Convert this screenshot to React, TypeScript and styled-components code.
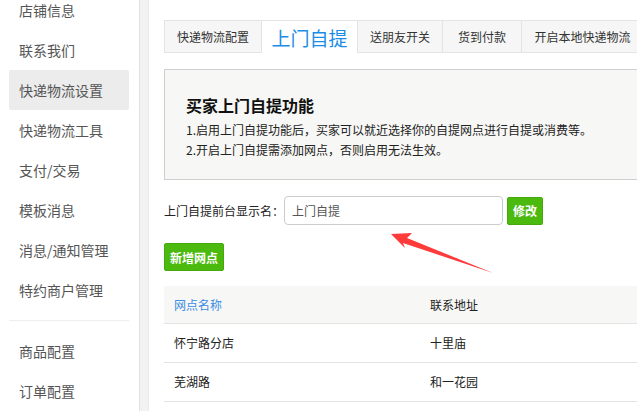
import React from "react";
import styled, { createGlobalStyle } from "styled-components";

const Global = createGlobalStyle`
  html, body { margin: 0; padding: 0; background: #fff; }
  body {
    font-family: "Noto Sans CJK SC", "Noto Sans", "Liberation Sans", sans-serif;
    color: #333;
    overflow: hidden;
  }
  * { box-sizing: border-box; }
`;

const Page = styled.div`
  position: relative;
  display: flex;
  width: 637px;
  height: 411px;
  overflow: hidden;
`;

const Sidebar = styled.nav`
  width: 139px;
  flex: none;
  padding: 0 10px 0 9px;
  margin-top: -10px;
  display: flex;
  flex-direction: column;
`;

const MenuItem = styled.div<{ $active?: boolean }>`
  height: 40px;
  line-height: 40px;
  padding-left: 10px;
  font-size: 14px;
  color: #555;
  border-radius: 2px;
  background: ${(p) => (p.$active ? "#ececec" : "transparent")};
  white-space: nowrap;
`;

const MenuDivider = styled.div`
  height: 1px;
  background: #eeeeee;
  margin: 10px 0;
`;

const Gutter = styled.div`
  width: 10px;
  flex: none;
  background: #f2f2f2;
  border-left: 1px solid #e2e2e2;
  border-right: 1px solid #eaeaea;
`;

const Main = styled.main`
  flex: 1;
  padding: 20px 0 0 15px;
  overflow: hidden;
`;

const Content = styled.div`
  width: 560px;
`;

const Tabs = styled.div`
  display: flex;
  height: 33px;
`;

const Tab = styled.div<{ $active?: boolean; $w: number }>`
  flex: none;
  width: ${(p) => p.$w}px;
  height: 33px;
  display: flex;
  align-items: center;
  justify-content: center;
  white-space: nowrap;
  border-top: 1px solid #e4e4e4;
  border-right: 1px solid #e4e4e4;
  border-bottom: ${(p) => (p.$active ? "none" : "1px solid #e4e4e4")};
  background: ${(p) => (p.$active ? "#fff" : "#f6f6f6")};
  color: ${(p) => (p.$active ? "#1b8de6" : "#333")};
  font-size: ${(p) => (p.$active ? "19px" : "12px")};
  &:first-child { border-left: 1px solid #e4e4e4; }
`;

const InfoBox = styled.section`
  margin-top: 16px;
  border: 1px solid #cfcfcf;
  background: #f7f7f5;
  padding: 23px 20px 19px 21px;
`;

const InfoTitle = styled.h3`
  margin: 0 0 3px;
  font-size: 16px;
  line-height: 24px;
  font-weight: 700;
  color: #111;
`;

const InfoLine = styled.p`
  margin: 0;
  font-size: 12px;
  line-height: 20px;
  color: #222;
  white-space: nowrap;
`;

const FormRow = styled.div`
  margin-top: 16px;
  display: flex;
  align-items: center;
  height: 29px;
`;

const Label = styled.label`
  font-size: 12px;
  color: #222;
  width: 120px;
  white-space: nowrap;
`;

const TextInput = styled.input`
  width: 219px;
  height: 29px;
  border: 1px solid #cccccc;
  border-radius: 4px;
  padding: 0 7px;
  font-family: inherit;
  font-size: 12px;
  color: #555;
  outline: none;
  background: #fff;
`;

const GreenButton = styled.button<{ $ml?: number }>`
  height: 28px;
  margin-left: ${(p) => p.$ml ?? 0}px;
  padding: 0 5px;
  border: 1px solid #45a90d;
  border-radius: 2px;
  background: #4cb90f;
  color: #fff;
  font-family: inherit;
  font-size: 12px;
  font-weight: 700;
  cursor: pointer;
`;

const ActionRow = styled.div`
  margin-top: 18px;
  display: flex;
`;

const Table = styled.div`
  margin-top: 15px;
  display: grid;
  grid-template-columns: 256px 1fr;
`;

const HeadCell = styled.div<{ $blue?: boolean }>`
  height: 38px;
  line-height: 37px;
  padding-left: 10px;
  background: #f7f7f5;
  border-bottom: 1px solid #e3e3e3;
  font-size: 12px;
  color: ${(p) => (p.$blue ? "#3b8ee3" : "#222")};
`;

const Cell = styled.div`
  height: 39px;
  line-height: 38px;
  padding-left: 10px;
  border-bottom: 1px solid #e3e3e3;
  font-size: 12px;
  color: #222;
`;

const Overlay = styled.svg`
  position: absolute;
  left: 0;
  top: 0;
  pointer-events: none;
`;

const menu = [
  "店铺信息",
  "联系我们",
  "快递物流设置",
  "快递物流工具",
  "支付/交易",
  "模板消息",
  "消息/通知管理",
  "特约商户管理",
];

const tabs = [
  { label: "快递物流配置", w: 98 },
  { label: "上门自提", w: 96, active: true },
  { label: "送朋友开关", w: 85 },
  { label: "货到付款", w: 79 },
  { label: "开启本地快递物流", w: 122 },
];

const rows = [
  ["怀宁路分店", "十里庙"],
  ["芜湖路", "和一花园"],
];

export default function App() {
  return (
    <>
      <Global />
      <Page>
        <Sidebar>
          {menu.map((m) => (
            <MenuItem key={m} $active={m === "快递物流设置"}>
              {m}
            </MenuItem>
          ))}
          <MenuDivider />
          <MenuItem>商品配置</MenuItem>
          <MenuItem>订单配置</MenuItem>
        </Sidebar>
        <Gutter />
        <Main>
          <Content>
            <Tabs>
              {tabs.map((t) => (
                <Tab key={t.label} $w={t.w} $active={t.active}>
                  {t.label}
                </Tab>
              ))}
            </Tabs>
            <InfoBox>
              <InfoTitle>买家上门自提功能</InfoTitle>
              <InfoLine>1.启用上门自提功能后，买家可以就近选择你的自提网点进行自提或消费等。</InfoLine>
              <InfoLine>2.开启上门自提需添加网点，否则启用无法生效。</InfoLine>
            </InfoBox>
            <FormRow>
              <Label>上门自提前台显示名：</Label>
              <TextInput defaultValue="上门自提" />
              <GreenButton $ml={4}>修改</GreenButton>
            </FormRow>
            <ActionRow>
              <GreenButton>新增网点</GreenButton>
            </ActionRow>
            <Table>
              <HeadCell $blue>网点名称</HeadCell>
              <HeadCell>联系地址</HeadCell>
              {rows.map(([a, b]) => (
                <React.Fragment key={a}>
                  <Cell>{a}</Cell>
                  <Cell>{b}</Cell>
                </React.Fragment>
              ))}
            </Table>
          </Content>
        </Main>
        <Overlay width="637" height="411" viewBox="0 0 637 411">
          <polygon
            points="391,234 412,233 407,238 493,273 403,243 405,248"
            fill="#ff3a3a"
          />
        </Overlay>
      </Page>
    </>
  );
}
